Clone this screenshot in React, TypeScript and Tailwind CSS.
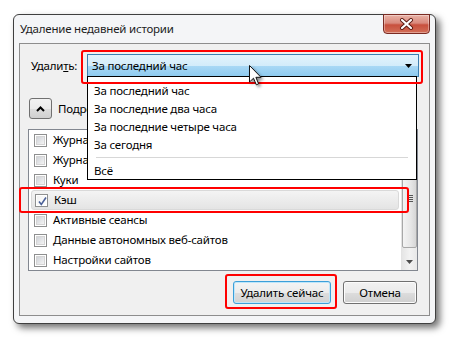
import React from "react";

const rows = [
  { label: "Журнал посещений и загрузок", checked: false },
  { label: "Журнал форм и поиска", checked: false },
  { label: "Куки", checked: false },
  { label: "Кэш", checked: true, hot: true },
  { label: "Активные сеансы", checked: false },
  { label: "Данные автономных веб-сайтов", checked: false },
  { label: "Настройки сайтов", checked: false },
];

const ranges = ["За последний час", "За последние два часа", "За последние четыре часа", "За сегодня"];

const CheckBox = ({ checked }: { checked?: boolean }) => (
  <span className="relative flex h-[13px] w-[13px] shrink-0 items-center justify-center border border-[#8e8f8f] bg-white">
    {checked ? (
      <span className="h-[9px] w-[9px] bg-gradient-to-br from-[#f2f2f2] to-white" />
    ) : (
      <span className="h-[9px] w-[9px] border border-[#d4d4d4] bg-gradient-to-br from-[#d0d3d8] to-[#f4f4f4]" />
    )}
    {checked && (
      <svg className="absolute left-[1px] top-[1px]" width="11" height="11" viewBox="0 0 11 11">
        <path d="M2 5.5 L4.3 8.5 L9 1.5" fill="none" stroke="#4b6198" strokeWidth="1.6" />
      </svg>
    )}
  </span>
);

const Cursor = () => (
  <svg width="14" height="22" viewBox="0 0 14 22" className="drop-shadow-[2px_2px_1.5px_rgba(0,0,0,0.45)]">
    <path d="M0.5 0.5 L0.5 17 L4.5 13.2 L7.3 19.8 L9.6 18.8 L6.9 12.3 L12 12.3 Z" fill="white" stroke="#111" strokeWidth="1" strokeLinejoin="round" />
  </svg>
);

const CloseButton = () => (
  <div className="-mt-px flex h-[20px] w-[47px] items-center justify-center rounded-b-[4px] border border-[#7a2a22] bg-[linear-gradient(#e9b2a6_0%,#d9897c_45%,#c8503d_55%,#d26e58_100%)] shadow-[inset_0_0_0_1px_rgba(255,255,255,0.35)]">
    <svg width="15" height="12" viewBox="0 0 15 12">
      <path d="M3 2 L12 10 M12 2 L3 10" stroke="#5a1a12" strokeWidth="4" strokeLinecap="round" />
      <path d="M3 2 L12 10 M12 2 L3 10" stroke="white" strokeWidth="2.2" strokeLinecap="round" />
    </svg>
  </div>
);

export default function App() {
  return (
    <div className="relative h-[340px] w-[452px] overflow-hidden bg-white pl-[13px] pt-[14px] font-['Noto_Sans',sans-serif] text-[11.5px] leading-[16px] tracking-[-0.2px] text-black">
      {/* window */}
      <div className="flex h-[310px] w-[423px] flex-col rounded-[6px] border border-[#3f3f3f] bg-[#f4f5f7] px-[5px] pb-[7px] shadow-[4px_4px_7px_rgba(0,0,0,0.55)]">
        <div className="flex h-[28px] shrink-0 items-start justify-between">
          <span className="pl-[1px] pt-[6px] text-[#1e1e1e]">Удаление недавней истории</span>
          <CloseButton />
        </div>
        {/* client */}
        <div className="flex flex-1 flex-col border border-[#8d8d8d] bg-[#f0f0f0]">
          <div className="mt-[10px] flex items-center pl-[11px]">
            <span className="w-[56px]">
              Удали<span className="underline">т</span>ь:
            </span>
            <div className="relative">
              <div className="flex h-[23px] w-[332px] items-center justify-between border border-[#3c7fb1] bg-[linear-gradient(#e3f3fc_0%,#d3ecfa_50%,#a9d8f5_52%,#8ecbf0_100%)] pl-[4px] pr-[6px]">
                <span>За последний час</span>
                <svg width="7" height="4" viewBox="0 0 7 4">
                  <path d="M0 0 H7 L3.5 4 Z" fill="#000" />
                </svg>
              </div>
              {/* open list */}
              <div className="absolute left-0 top-[22px] z-10 w-[330px] border border-black bg-white pt-[5px]">
                {ranges.map((r) => (
                  <div key={r} className="flex h-[18px] items-center pl-[6px]">
                    {r}
                  </div>
                ))}
                <div className="mx-[8px] mb-[4px] mt-[3px] h-px bg-[#d7d7d7]" />
                <div className="flex h-[17px] items-end pl-[6px]">Всё</div>
              </div>
            </div>
          </div>

          <div className="ml-[9px] mt-[21px] flex items-center gap-[6px]">
            <div className="flex h-[21px] w-[23px] items-center justify-center rounded-[3px] border border-[#707070] bg-[linear-gradient(#f2f2f2_0%,#ebebeb_50%,#dddddd_51%,#cfcfcf_100%)]">
              <svg width="9" height="6" viewBox="0 0 9 6">
                <path d="M1 5 L4.5 1.5 L8 5" fill="none" stroke="#000" strokeWidth="2" />
              </svg>
            </div>
            <span>Подробности</span>
          </div>

          {/* checkbox list */}
          <div className="ml-[8px] mt-[10px] flex h-[142px] w-[390px] border border-[#828790] bg-white">
            <div className="flex flex-1 flex-col">
              {rows.map((r) => (
                <div key={r.label} className="flex h-[20px] items-center">
                  <div
                    className={`mx-[2px] flex h-[20px] flex-1 items-center gap-[6px] rounded-[3px] pl-[3px] ${
                      r.hot ? "border border-[#d9d9d9] bg-[linear-gradient(#f4f4f4,#e4e4e4)] pl-[2px]" : ""
                    }`}
                  >
                    <CheckBox checked={r.checked} />
                    <span>{r.label}</span>
                  </div>
                </div>
              ))}
            </div>
            {/* scrollbar */}
            <div className="flex w-[16px] flex-col border-l border-[#e3e3e3] bg-[linear-gradient(90deg,#e5e5e5,#f2f2f2,#e8e8e8)]">
              <div className="h-[17px]" />
              <div className="mt-[1px] flex h-[100px] items-center justify-center rounded-[2px] border border-[#a8a8a8] bg-[linear-gradient(90deg,#f4f4f4,#e6e6e6_60%,#d6d6d6)]">
                <svg width="6" height="8" viewBox="0 0 6 8">
                  <path d="M0 1.5 H6 M0 3.5 H6 M0 5.5 H6 M0 7.5 H6" stroke="#555" strokeWidth="1" />
                </svg>
              </div>
              <div className="flex-1" />
              <div className="flex h-[17px] items-center justify-center">
                <svg width="7" height="4" viewBox="0 0 7 4">
                  <path d="M0 0 H7 L3.5 4 Z" fill="#4d4d4d" />
                </svg>
              </div>
            </div>
          </div>

          <div className="mr-[12px] mt-[10px] flex justify-end gap-[12px]">
            <div className="flex h-[23px] w-[98px] items-center justify-center rounded-[3px] border border-[#3c9fd9] bg-[linear-gradient(#f4f4f4_0%,#ececec_50%,#dedede_51%,#d2d2d2_100%)] shadow-[inset_0_0_0_1px_#bfe6fa]">
              Удалить сейчас
            </div>
            <div className="flex h-[23px] w-[74px] items-center justify-center rounded-[3px] border border-[#707070] bg-[linear-gradient(#f2f2f2_0%,#ebebeb_50%,#dddddd_51%,#cfcfcf_100%)] shadow-[inset_0_0_0_1px_#fcfcfc]">
              Отмена
            </div>
          </div>
        </div>
      </div>

      {/* annotation frames */}
      <div className="absolute left-[81px] top-[50px] z-20 h-[34px] w-[342px] rounded-[3px] border-2 border-[#ff0000]" />
      <div className="absolute left-[19px] top-[187px] z-20 h-[26px] w-[390px] rounded-[3px] border-2 border-[#ff0000]" />
      <div className="absolute left-[225px] top-[274px] z-20 h-[35px] w-[112px] rounded-[3px] border-2 border-[#ff0000]" />

      <div className="absolute left-[249px] top-[65px] z-30">
        <Cursor />
      </div>
    </div>
  );
}
